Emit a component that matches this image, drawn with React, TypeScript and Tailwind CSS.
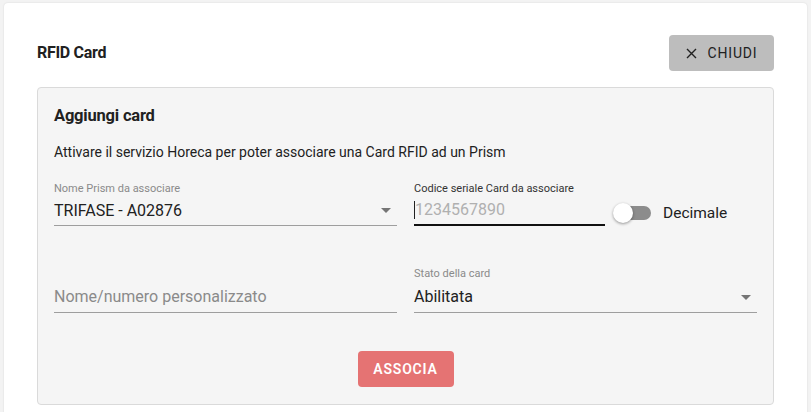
import React from "react";

function Caret() {
  return (
    <svg width="10" height="5" viewBox="0 0 10 5" className="shrink-0">
      <path d="M0 0 L10 0 L5 5 Z" fill="#757575" />
    </svg>
  );
}

export default function App() {
  return (
    <div
      className="w-[811px] h-[412px] overflow-hidden bg-[#f3f3f3] pt-[3px] px-[4px]"
      style={{ fontFamily: "Roboto, 'Liberation Sans', sans-serif" }}
    >
      <div className="bg-white rounded-[4px] shadow-[0_0_2px_rgba(0,0,0,0.12)] h-[430px] pt-[32px] px-[33px]">
        <div className="flex items-center justify-between h-[36px]">
          <div className="text-[16px] font-bold text-[#212121] tracking-[-0.3px]">RFID Card</div>
          <button className="w-[105px] h-[36px] rounded-[4px] bg-[#bdbdbd] flex items-center justify-center gap-[11px] text-[14px] text-[#212121] tracking-[0.8px]">
            <svg width="11" height="11" viewBox="0 0 11 11">
              <path d="M1 1 L10 10 M10 1 L1 10" stroke="#212121" strokeWidth="1.4" />
            </svg>
            CHIUDI
          </button>
        </div>
        <div className="mt-[16px] border border-[#dadada] rounded-[4px] bg-[#f5f5f5] h-[318px] px-[16px] pt-[18px]">
          <div className="text-[16.5px] font-bold text-[#212121] leading-[20px] tracking-[-0.2px]">Aggiungi card</div>
          <div className="mt-[17px] text-[14px] text-[#212121] leading-[18px]">
            Attivare il servizio Horeca per poter associare una Card RFID ad un Prism
          </div>
          <div className="mt-[21px] grid grid-cols-2 gap-x-[17px]">
            <div>
              <div className="text-[11px] text-[#8a8a8a] leading-[14px]">Nome Prism da associare</div>
              <div className="flex items-center justify-between h-[30px] border-b border-[#9e9e9e] pr-[6px]">
                <span className="text-[16px] text-[#212121] mt-[1px]">TRIFASE - A02876</span>
                <Caret />
              </div>
            </div>
            <div className="flex items-end">
              <div className="w-[191px]">
                <div className="text-[11px] text-[#333] leading-[14px]">Codice seriale Card da associare</div>
                <div className="flex items-center h-[30px] border-b-2 border-[#111]">
                  <span className="w-px h-[18px] bg-[#212121]" />
                  <span className="text-[16px] text-[#b0b0b0]">1234567890</span>
                </div>
              </div>
              <div className="ml-[8px] mb-[1px] flex items-center">
                <div className="relative w-[38px] h-[20px] flex items-center">
                  <div className="ml-[4px] w-[34px] h-[14px] rounded-full bg-[#8c8c8c]" />
                  <div className="absolute left-0 top-0 w-[20px] h-[20px] rounded-full bg-white shadow-[0_1px_3px_rgba(0,0,0,0.4)]" />
                </div>
                <span className="ml-[12px] text-[15.5px] text-[#212121]">Decimale</span>
              </div>
            </div>
          </div>
          <div className="mt-[41px] grid grid-cols-2 gap-x-[17px]">
            <div className="flex flex-col justify-end">
              <div className="flex items-center h-[31px] border-b border-[#9e9e9e]">
                <span className="text-[16px] text-[#8a8a8a]">Nome/numero personalizzato</span>
              </div>
            </div>
            <div>
              <div className="text-[11px] text-[#8a8a8a] leading-[14px]">Stato della card</div>
              <div className="mt-[1px] flex items-center justify-between h-[31px] border-b border-[#9e9e9e] pr-[6px]">
                <span className="text-[16px] text-[#212121]">Abilitata</span>
                <Caret />
              </div>
            </div>
          </div>
          <div className="mt-[38px] flex justify-center">
            <button className="w-[96px] h-[36px] rounded-[4px] bg-[#e57373] text-white text-[14px] font-semibold tracking-[0.8px]">
              ASSOCIA
            </button>
          </div>
        </div>
      </div>
    </div>
  );
}
